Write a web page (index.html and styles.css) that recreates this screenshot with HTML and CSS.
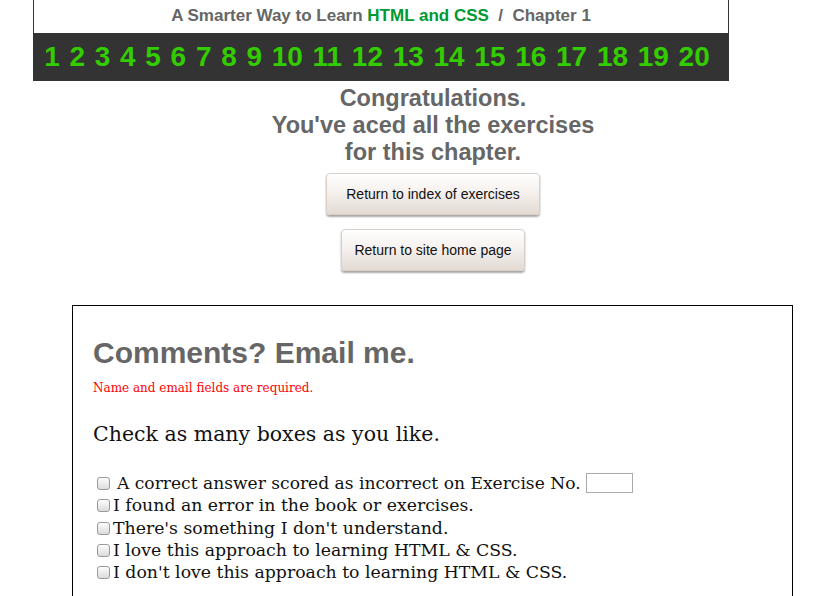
FILE: index.html
```html
<!DOCTYPE html>
<html>
<head>
<meta charset="utf-8">
<link rel="stylesheet" href="styles.css">
</head>
<body>
<div class="header">
  <div class="title">A Smarter Way to Learn <span class="green">HTML and CSS</span> &nbsp;/&nbsp; Chapter 1</div>
  <div class="nav">
    <span>1</span><span>2</span><span>3</span><span>4</span><span>5</span><span>6</span><span>7</span><span>8</span><span>9</span><span>10</span><span>11</span><span>12</span><span>13</span><span>14</span><span>15</span><span>16</span><span>17</span><span>18</span><span>19</span><span>20</span>
  </div>
</div>
<div class="main">
  <div class="congrats">Congratulations.<br>You've aced all the exercises<br>for this chapter.</div>
  <button class="btn btn-index">Return to index of exercises</button>
  <button class="btn btn-home">Return to site home page</button>
</div>
<div class="comments">
  <h2 class="ctitle">Comments? Email me.</h2>
  <p class="req">Name and email fields are required.</p>
  <p class="check">Check as many boxes as you like.</p>
  <div class="opts">
    <label class="opt first"><span class="cb"></span><span class="first-text">A correct answer scored as incorrect on Exercise No.</span><input type="text" class="exno"></label>
    <label class="opt"><span class="cb"></span>I found an error in the book or exercises.</label>
    <label class="opt"><span class="cb"></span>There's something I don't understand.</label>
    <label class="opt"><span class="cb"></span>I love this approach to learning HTML &amp; CSS.</label>
    <label class="opt"><span class="cb"></span>I don't love this approach to learning HTML &amp; CSS.</label>
  </div>
</div>
</body>
</html>
```
FILE: styles.css
```css
html, body { margin: 0; padding: 0; background: #fff; }
body { font-family: "Liberation Sans", Arial, sans-serif; overflow: hidden; height: 596px; }

.header {
  width: 694px;
  margin-left: 33px;
  border-left: 1px solid #333;
  border-right: 1px solid #333;
}
.title {
  height: 33px;
  line-height: 32px;
  text-align: center;
  font-size: 17px;
  font-weight: bold;
  color: #666;
}
.green { color: #009933; }
.nav {
  background: #333;
  height: 48px;
  display: flex;
  align-items: center;
  justify-content: center;
  gap: 9.7px;
  padding-right: 8px;
  font-size: 28px;
  font-weight: bold;
  color: #33cc00;
}
.nav span { display: inline-block; }

.main {
  width: 826px;
  margin-left: 20px;
  display: flex;
  flex-direction: column;
  align-items: center;
}
.congrats {
  margin-top: 4px;
  text-align: center;
  font-size: 23.5px;
  line-height: 27px;
  font-weight: bold;
  color: #666;
}
.btn {
  margin-top: 7px;
  margin-bottom: 8px;
  height: 42px;
  padding: 0;
  font-family: "Liberation Sans", Arial, sans-serif;
  font-size: 14px;
  color: #111;
  border: 1px solid #d8d0c8;
  border-radius: 4px;
  background: linear-gradient(#ffffff 0%, #f5f1ee 45%, #e3dad3 100%);
  box-shadow: 0 2px 2px rgba(0,0,0,0.35);
}
.btn-index { width: 214px; }
.btn-home { width: 184px; margin-top: 6px; }

.comments {
  margin-left: 72px;
  margin-top: 26px;
  width: 679px;
  height: 400px;
  border: 1px solid #000;
  padding: 0 20px;
  font-family: "DejaVu Serif", Georgia, serif;
}
.ctitle {
  margin: 29px 0 0;
  font-family: "Liberation Sans", Arial, sans-serif;
  font-size: 30px;
  font-weight: bold;
  color: #666;
  line-height: 36px;
}
.req {
  margin: 10px 0 0;
  font-size: 12px;
  color: #ff0000;
}
.check {
  margin: 27px 0 0;
  font-size: 20.5px;
  color: #111;
}
.opts { margin-top: 26px; display: flex; flex-direction: column; }
.opt {
  font-size: 17.3px;
  line-height: 22px;
  height: 22.25px;
  color: #111;
  display: flex;
  align-items: center;
}
.first-text { font-size: 17.1px; margin-right: 5px; }
.cb {
  display: inline-block;
  width: 11px; height: 11px;
  margin: 1px 3px 0 4px;
  border: 1px solid #9a9a9a;
  border-radius: 3px;
  background: linear-gradient(#fcfcfc, #dcdcdc);
  box-sizing: content-box;
}
.opt.first .cb { margin-right: 7px; }
.exno {
  width: 43px;
  height: 16px;
  margin: 0;
  border: 1px solid #aaa;
  padding: 1px;
}
```
